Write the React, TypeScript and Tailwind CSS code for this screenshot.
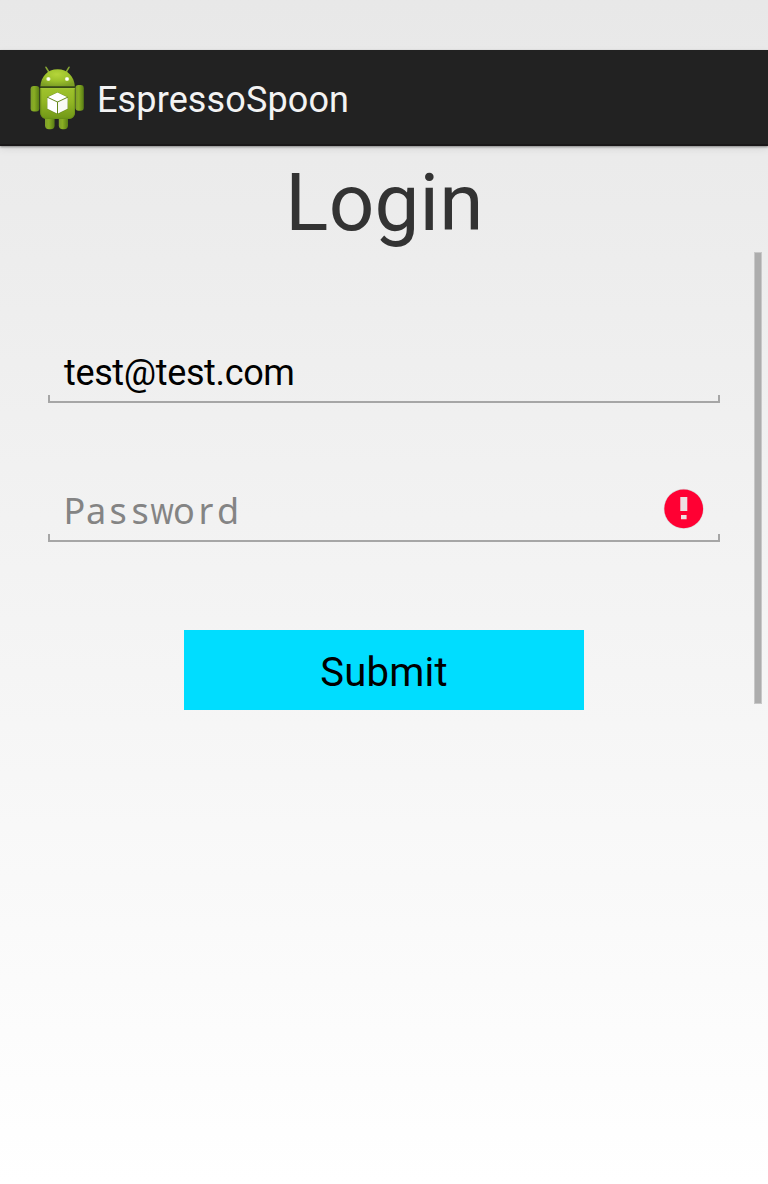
import type { ReactNode } from "react";

function AndroidLogo() {
  return (
    <svg width="54" height="64" viewBox="0 0 54 64" className="block">
      <defs>
        <linearGradient id="body" x1="0" y1="0" x2="0" y2="1">
          <stop offset="0" stopColor="#9fc32c" />
          <stop offset="0.45" stopColor="#92b624" />
          <stop offset="1" stopColor="#709717" />
        </linearGradient>
        <linearGradient id="limb" x1="0" y1="0" x2="1" y2="0">
          <stop offset="0" stopColor="#7e9f2b" />
          <stop offset="0.4" stopColor="#89ae23" />
          <stop offset="1" stopColor="#587c14" />
        </linearGradient>
        <radialGradient id="head" cx="0.48" cy="0.3" r="0.7">
          <stop offset="0" stopColor="#b5d53a" />
          <stop offset="0.55" stopColor="#9cc12b" />
          <stop offset="1" stopColor="#7d9f25" />
        </radialGradient>
      </defs>
      <path d="M16 1.3 19.5 7M39 1.3 35.5 7" stroke="#87a635" strokeWidth="1.6" strokeLinecap="round" />
      <rect x="15" y="48" width="9.6" height="15.3" rx="4" fill="url(#limb)" />
      <rect x="28.8" y="48" width="9.2" height="15.3" rx="4" fill="url(#limb)" />
      <rect x="0.6" y="20" width="8.8" height="25.5" rx="3.2" fill="url(#limb)" />
      <rect x="45.4" y="19" width="8.4" height="25.7" rx="3.2" fill="url(#limb)" />
      <path d="M10.2 22h34.8v25a6 6 0 0 1-6 6H16.2a6 6 0 0 1-6-6z" fill="url(#body)" />
      <path d="M10.8 22.5v24.5a5.4 5.4 0 0 0 5.4 5.4h22.8a5.4 5.4 0 0 0 5.4-5.4v-24.5" fill="none" stroke="#668b18" strokeOpacity="0.6" />
      <path d="M10.4 20.4C10.9 10.5 17.6 3.2 27.6 3.2s16.7 7.3 17.2 17.2z" fill="url(#head)" />
      <path d="M10.4 21.2h34.6" stroke="#3f5615" strokeWidth="1.2" />
      <path d="M11 22.8h33.4" stroke="#a6c83f" strokeWidth="0.8" />
      <circle cx="18.4" cy="13" r="2.1" fill="#edf5d0" />
      <circle cx="37" cy="13" r="2.1" fill="#edf5d0" />
      <circle cx="18.4" cy="13" r="1.2" fill="#fff" />
      <circle cx="37" cy="13" r="1.2" fill="#fff" />
      <path d="M27.5 26.2 38 31v12L27.5 48.2 17 43V31z" fill="#587a17" fillOpacity="0.75" />
      <path d="M27.5 26.5 37 30.9 27.5 35.4 18 30.9z" fill="#fff" />
      <path d="M17.4 31.7 27 36.2v11.2l-9.6-4.7z" fill="#fff" />
      <path d="M28 36.2 37.6 31.7v11L28 47.4z" fill="#f9faf5" />
    </svg>
  );
}

function ErrorIcon() {
  return (
    <svg width="42" height="42" viewBox="0 0 42 42" className="block">
      <circle cx="20.7" cy="20.8" r="20" fill="#c0c0c0" fillOpacity="0.5" />
      <circle cx="20.7" cy="20.8" r="19.4" fill="#ff0033" />
      <path d="M17.3 9h7v14h-7zM18 27h5.6v4.2H18z" fill="#eddfe2" />
    </svg>
  );
}

function Field({ children, className }: { children: ReactNode; className: string }) {
  return (
    <div className={`flex flex-col ${className}`}>
      <div className="flex h-[50px] items-center justify-between pr-[15px] pl-4">{children}</div>
      <div className="h-2 border-x-2 border-b-2 border-[#a6a6a6]" />
    </div>
  );
}

function PasswordHint() {
  return (
    <div className="-ml-px flex pt-1 font-['Noto_Sans','Open_Sans',sans-serif] text-[36px] leading-[50px] text-[#848484]">
      {"Password".split("").map((letter, i) => (
        <span
          key={i}
          className={`flex w-[22px] justify-center ${letter === "w" ? "scale-x-[0.82]" : ""} ${letter === "P" ? "pl-px" : ""}`}
        >
          {letter}
        </span>
      ))}
    </div>
  );
}

export default function App() {
  return (
    <div className="relative flex h-[1184px] w-[768px] flex-col overflow-hidden bg-linear-to-b from-[#e8e8e8] to-white pt-[50px] font-['Roboto',sans-serif]">
      <header className="flex h-24 shrink-0 items-center border-b-2 border-[#1a1819] bg-[#222222] pl-[30px] shadow-[0_1px_2px_rgba(0,0,0,0.4),0_3px_8px_rgba(0,0,0,0.08)]">
        <div className="pt-0.5">
          <AndroidLogo />
        </div>
        <h1 className="pt-1.5 pl-[13px] text-[36px] leading-[42px] tracking-[0.13px] text-[#f3f3f3]">EspressoSpoon</h1>
      </header>
      <main className="flex flex-col px-12">
        <h2 className="mt-[10px] pl-px text-center text-[80px] leading-[94px] tracking-[0.2px] text-[#333333]">Login</h2>
        <Field className="mt-[95px]">
          <span className="pt-1.5 text-[36px] leading-[42px] tracking-[-0.36px] text-black">test@test.com</span>
        </Field>
        <Field className="mt-[81px]">
          <PasswordHint />
          <ErrorIcon />
        </Field>
        <button className="mt-[88px] h-20 w-[400px] self-center bg-[#00ddff] pt-1 text-[40px] leading-[47px] tracking-[0.2px] text-black">
          Submit
        </button>
      </main>
      <div className="absolute top-[252px] right-[6px] h-[452px] w-2 border border-[#c8c8c8] bg-[#adadad]" />
    </div>
  );
}
